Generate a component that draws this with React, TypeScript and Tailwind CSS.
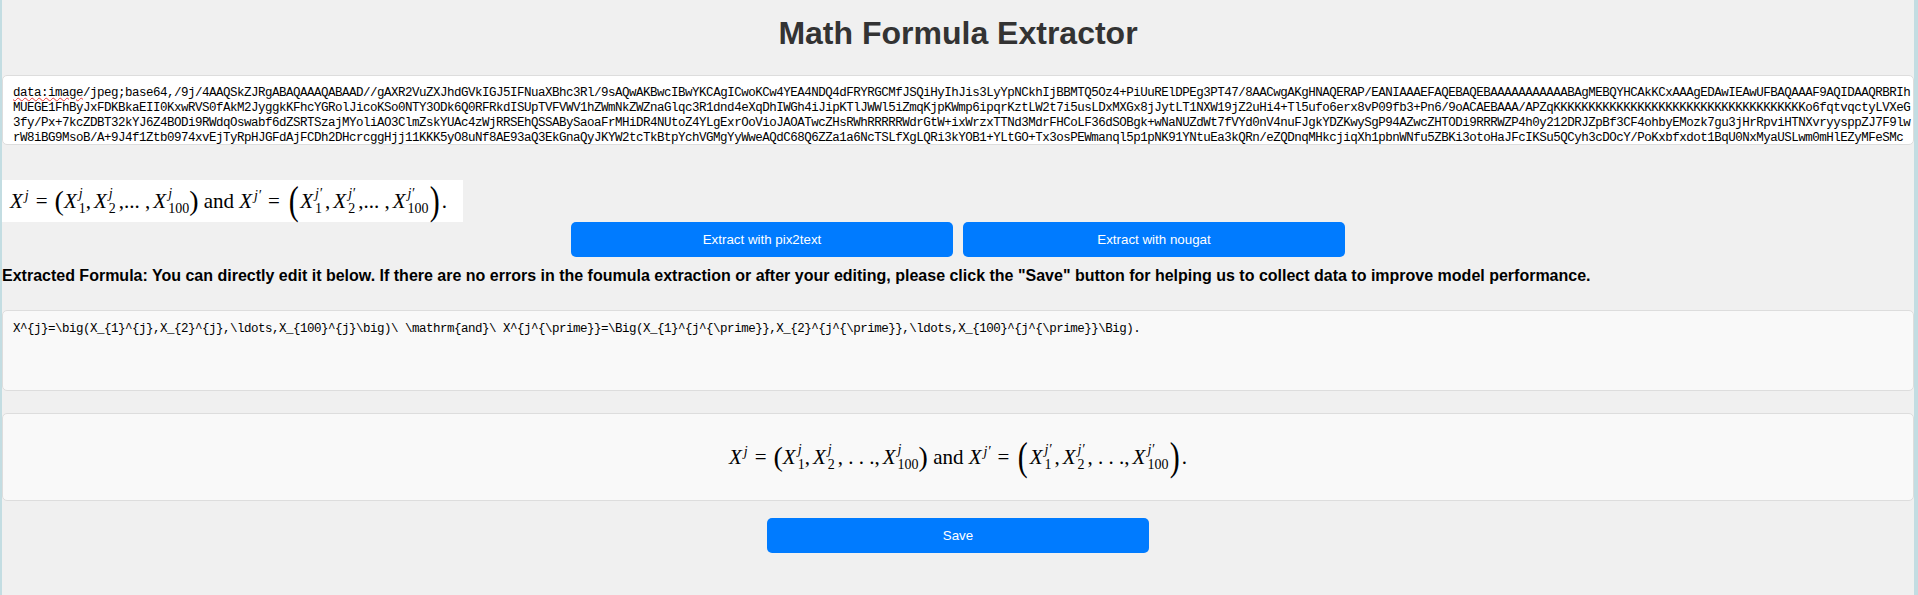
const dataLines = [
  "image/jpeg;base64,/9j/4AAQSkZJRgABAQAAAQABAAD//gAXR2VuZXJhdGVkIGJ5IFNuaXBhc3Rl/9sAQwAKBwcIBwYKCAgICwoKCw4YEA4NDQ4dFRYRGCMfJSQiHyIhJis3LyYpNCkhIjBBMTQ5Oz4+PiUuRElDPEg3PT47/8AACwgAKgHNAQERAP/EANIAAAEFAQEBAQEBAAAAAAAAAAABAgMEBQYHCAkKCxAAAgEDAwIEAwUFBAQAAAF9AQIDAAQRBRIh",
  "MUEGE1FhByJxFDKBkaEII0KxwRVS0fAkM2JyggkKFhcYGRolJicoKSo0NTY3ODk6Q0RFRkdISUpTVFVWV1hZWmNkZWZnaGlqc3R1dnd4eXqDhIWGh4iJipKTlJWWl5iZmqKjpKWmp6ipqrKztLW2t7i5usLDxMXGx8jJytLT1NXW19jZ2uHi4+Tl5ufo6erx8vP09fb3+Pn6/9oACAEBAAA/APZqKKKKKKKKKKKKKKKKKKKKKKKKKKKKKKKKKKKKo6fqtvqctyLVXeG",
  "3fy/Px+7kcZDBT32kYJ6Z4BODi9RWdqOswabf6dZSRTSzajMYoliAO3ClmZskYUAc4zWjRRSEhQSSABySaoaFrMHiDR4NUtoZ4YLgExrOoVioJAOATwcZHsRWhRRRRRWdrGtW+ixWrzxTTNd3MdrFHCoLF36dSOBgk+wNaNUZdWt7fVYd0nV4nuFJgkYDZKwySgP94AZwcZHTODi9RRRWZP4h0y212DRJZpBf3CF4ohbyEMozk7gu3jHrRpviHTNXvryysppZJ7F9lw",
  "rW8iBG9MsoB/A+9J4f1Ztb0974xvEjTyRpHJGFdAjFCDh2DHcrcggHjj11KKK5yO8uNf8AE93aQ3EkGnaQyJKYW2tcTkBtpYchVGMgYyWweAQdC68Q6ZZa1a6NcTSLfXgLQRi3kYOB1+YLtGO+Tx3osPEWmanql5p1pNK91YNtuEa3kQRn/eZQDnqMHkcjiqXh1pbnWNfu5ZBKi3otoHaJFcIKSu5QCyh3cDOcY/PoKxbfxdot1BqU0NxMyaUSLwm0mHlEZyMFeSMc",
]

const latex =
  "X^{j}=\\big(X_{1}^{j},X_{2}^{j},\\ldots,X_{100}^{j}\\big)\\ \\mathrm{and}\\ X^{j^{\\prime}}=\\Big(X_{1}^{j^{\\prime}},X_{2}^{j^{\\prime}},\\ldots,X_{100}^{j^{\\prime}}\\Big)."

const Term = ({ sub, sup }: { sub?: string; sup: string }) => (
  <span className="inline-flex items-center">
    <i>X</i>
    {sub ? (
      <span className="inline-flex flex-col ml-[2px] text-[14px] leading-[15px]">
        <i>{sup}</i>
        <span>{sub}</span>
      </span>
    ) : (
      <i className="ml-[2px] -mt-[10px] text-[14px] leading-none">{sup}</i>
    )}
  </span>
)

const Formula = ({ dots }: { dots: string }) => (
  <div className="flex items-center font-['Liberation_Serif',serif] text-[21px] leading-[30px] text-black whitespace-pre">
    <Term sup="j" />
    <span className="mx-[7px]">=</span>
    <span className="text-[28px] font-light">(</span>
    <Term sub="1" sup="j" />
    <span className="mr-[3px]">,</span>
    <Term sub="2" sup="j" />
    <span className="mx-[3px]">,{dots},</span>
    <Term sub="100" sup="j" />
    <span className="text-[28px] font-light">)</span>
    <span> and </span>
    <Term sup="j′" />
    <span className="mx-[7px]">=</span>
    <span className="text-[40px] leading-[40px] font-light scale-x-75">(</span>
    <Term sub="1" sup="j′" />
    <span className="mx-[3px]">,</span>
    <Term sub="2" sup="j′" />
    <span className="mx-[3px]">,{dots},</span>
    <Term sub="100" sup="j′" />
    <span className="text-[40px] leading-[40px] font-light scale-x-75">)</span>
    <span>.</span>
  </div>
)

const BlueButton = ({ children }: { children: string }) => (
  <button className="w-[382px] h-[35px] rounded-[5px] bg-[#007bff] text-white text-[13.33px]">
    {children}
  </button>
)

export default function App() {
  return (
    <div className="h-[595px] overflow-hidden bg-[#f0f0f0] border-l-2 border-r-4 border-[#c3dde2] font-['Liberation_Sans',Arial,sans-serif]">
      <h1 className="mt-[15px] mb-[23px] text-center text-[32px] leading-[37px] font-bold text-[#333]">
        Math Formula Extractor
      </h1>

      <div className="h-[70px] overflow-hidden rounded-[5px] border border-[#ddd] bg-white px-[10px] pt-[10px] font-['Liberation_Mono',monospace] text-[12.5px] leading-[15px] tracking-[-0.5px] text-black whitespace-pre">
        {dataLines.map((line, i) => (
          <div key={i}>
            {i === 0 && (
              <span className="underline decoration-wavy decoration-[#e33] decoration-1">data:image</span>
            )}
            {i === 0 ? line.replace("image", "") : line}
          </div>
        ))}
      </div>

      <div className="mt-[35px] flex h-[42px] w-[461px] items-center bg-white pl-2">
        <Formula dots="... " />
      </div>

      <div className="flex justify-center gap-[10px]">
        <BlueButton>Extract with pix2text</BlueButton>
        <BlueButton>Extract with nougat</BlueButton>
      </div>

      <p className="mt-[10px] text-base leading-[18px] font-bold text-black">
        Extracted Formula: You can directly edit it below. If there are no errors in the foumula extraction or after your editing, please click the "Save" button for helping us to collect data to improve model performance.
      </p>

      <div className="mt-[25px] h-[81px] rounded-[5px] border border-[#ddd] bg-[#f9f9f9] px-[10px] pt-[11px] font-['Liberation_Mono',monospace] text-[12.5px] leading-[15px] tracking-[-0.5px] text-black whitespace-pre">
        {latex}
      </div>

      <div className="mt-[22px] flex h-[88px] items-center justify-center rounded-[5px] border border-[#ddd] bg-[#f9f9f9]">
        <Formula dots=" . . ." />
      </div>

      <div className="mt-[17px] flex justify-center">
        <BlueButton>Save</BlueButton>
      </div>
    </div>
  )
}
